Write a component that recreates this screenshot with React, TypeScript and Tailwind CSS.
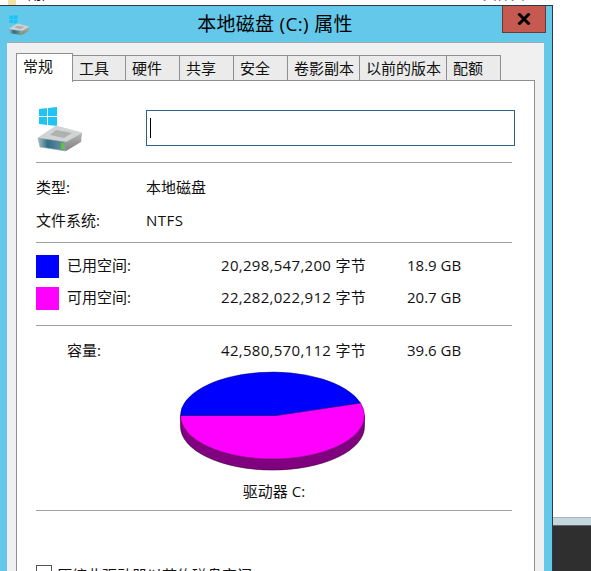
const tabs = [
  { label: "工具", width: "w-[53px]" },
  { label: "硬件", width: "w-[54px]" },
  { label: "共享", width: "w-[54px]" },
  { label: "安全", width: "w-[54px]" },
  { label: "卷影副本", width: "w-[72px]" },
  { label: "以前的版本", width: "w-[87px]" },
  { label: "配额", width: "w-[54px]" },
];

const DriveIcon = ({ className }: { className: string }) => (
  <svg viewBox="0 0 48 48" className={className}>
    <defs>
      <linearGradient id="front" x1="0" y1="0" x2="1" y2="0">
        <stop offset="0" stopColor="#a9bcc2" />
        <stop offset="0.35" stopColor="#2f6f86" />
        <stop offset="0.8" stopColor="#5f8a99" />
        <stop offset="1" stopColor="#8a9ea5" />
      </linearGradient>
      <linearGradient id="side" x1="0" y1="0" x2="0" y2="1">
        <stop offset="0" stopColor="#b5b7b7" />
        <stop offset="1" stopColor="#7f8181" />
      </linearGradient>
    </defs>
    <polygon points="3,4 11,3 11,11 3,11" fill="#1fc4f5" />
    <polygon points="12,3 21,2 21,11 12,11" fill="#1fc4f5" />
    <polygon points="3,12 11,12 11,20 3,19" fill="#1fc4f5" />
    <polygon points="12,12 21,12 21,21 12,20" fill="#1fc4f5" />
    <polygon points="2,33 20,21 46,28 30,37" fill="#d2d4d4" stroke="#d2d4d4" strokeLinejoin="round" />
    <polygon points="20,25 36,28 28,33 14,30" fill="#aeb1b1" />
    <polygon points="2,33 30,37 30,46 4,42" fill="url(#front)" stroke="#8a9ea5" strokeWidth="0.5" strokeLinejoin="round" />
    <polygon points="30,37 46,28 45,37 30,46" fill="url(#side)" />
    <rect x="25" y="38" width="3" height="6" fill="#5fc23c" />
  </svg>
);

const Pie = () => (
  <svg viewBox="0 0 186 100" className="w-[186px] h-[100px]">
    <path d="M0.5 44.5 v11 A92 43.5 0 0 0 184.5 55.5 v-11 A92 43.5 0 0 1 0.5 44.5 Z" fill="#800080" stroke="#3a003a" strokeWidth="0.6" />
    <path d="M96 44.5 L180.5 31.9 A92 43.5 0 0 1 184.5 44.5 A92 43.5 0 0 1 0.5 44.5 Z" fill="#ff00ff" stroke="#5a005a" strokeWidth="0.5" />
    <path d="M96 44.5 L0.5 44.5 A92 43.5 0 0 1 180.5 31.9 Z" fill="#0000ff" stroke="#00006a" strokeWidth="0.5" />
  </svg>
);

const SizeRow = ({ swatch, label, bytes, size, className }: { swatch?: string; label: string; bytes: string; size: string; className: string }) => (
  <div className={`grid grid-cols-[31px_154px_186px_auto] items-start ${className}`}>
    {swatch ? <div className={`w-[23px] h-[23px] ${swatch}`} /> : <div />}
    <span>{label}</span>
    <span className="tracking-[0.3px]">{bytes}</span>
    <span>{size}</span>
  </div>
);

export default function App() {
  return (
    <div className="w-[591px] h-[571px] bg-white overflow-hidden text-[15px] leading-[20px] text-[#111] font-['Open_Sans','Noto_Sans_CJK_SC',sans-serif]">
      {/* desktop behind the dialog, only its lower edge shows */}
      <div className="h-[5px] overflow-hidden flex items-start text-[14px]">
        <div className="ml-[8px] w-[8px] h-[5px] bg-[#f3e1a0]" />
        <span className="ml-[12px] -mt-[16px]">用户</span>
        <span className="ml-[285px] -mt-[16px] text-[#555]">2021/10/20 14:48</span>
        <span className="ml-[28px] -mt-[16px] text-[#555]">文件夹</span>
      </div>

      <div className="flex h-[566px]">
        <div className="relative w-[553px] border-t border-r border-[#2b3a44] bg-[#63c8ea]">
          {/* title bar */}
          <div className="h-[36px] flex items-center relative">
            <DriveIcon className="ml-[8px] mt-[2px] w-[22px] h-[22px] blur-[0.3px]" />
            <div className="flex-1 text-center text-[19px] leading-[24px] tracking-[0.3px] text-black pr-[32px]">本地磁盘 (C:) 属性</div>
            <button className="absolute top-0 right-[6px] w-[44px] h-[27px] bg-[#c75a50] border border-[#6b3a36] border-t-0 flex items-center justify-center">
              <svg viewBox="0 0 14 12" className="w-[14px] h-[12px]">
                <path d="M1.5 0.5 L12.5 11.5 M12.5 0.5 L1.5 11.5" stroke="#000" strokeWidth="3" />
              </svg>
            </button>
          </div>

          {/* dialog body */}
          <div className="ml-[7px] w-[537px] h-[529px] bg-[#f0f0f0] border-t border-[#a3abb0] pl-[9px] pr-[9px] pt-[10px]">
            <div className="flex h-[27px] items-end relative z-10">
              <div className="w-[57px] h-[29px] bg-white border border-b-0 border-[#8e8f94] pl-[6px] pt-[2px] -mb-[2px] text-[15px]">常规</div>
              {tabs.map((t) => (
                <div key={t.label} className={`${t.width} h-[25px] bg-[#ebebeb] border border-b-0 border-l-0 border-[#8e8f94] flex items-center pl-[6px] text-[15px]`}>
                  {t.label}
                </div>
              ))}
            </div>

            <div className="w-[519px] h-[491px] bg-white border border-b-0 border-[#8e8f94] pl-[19px] pt-[24px]">
              <div className="flex items-start h-[57px]">
                <DriveIcon className="w-[48px] h-[48px] blur-[0.4px]" />
                <div className="ml-[62px] mt-[5px] w-[369px] h-[36px] border border-[#2b6288] flex items-center pl-[3px]">
                  <div className="w-px h-[20px] bg-black" />
                </div>
              </div>
              <div className="w-[476px] h-px bg-[#a0a0a0]" />

              <div className="mt-[14px] h-[20px] flex"><span className="w-[110px]">类型:</span><span>本地磁盘</span></div>
              <div className="mt-[13px] h-[20px] flex"><span className="w-[110px]">文件系统:</span><span className="tracking-[0.5px]">NTFS</span></div>
              <div className="mt-[12px] w-[476px] h-px bg-[#a0a0a0]" />

              <SizeRow className="mt-[12px] h-[23px]" swatch="bg-[#0000ff]" label="已用空间:" bytes="20,298,547,200 字节" size="18.9 GB" />
              <SizeRow className="mt-[9px] h-[23px]" swatch="bg-[#ff00ff]" label="可用空间:" bytes="22,282,022,912 字节" size="20.7 GB" />
              <div className="mt-[15px] w-[476px] h-px bg-[#a0a0a0]" />
              <SizeRow className="mt-[14px] h-[20px]" label="容量:" bytes="42,580,570,112 字节" size="39.6 GB" />

              <div className="mt-[11px] ml-[144px]"><Pie /></div>
              <div className="mt-[10px] w-[476px] text-center">驱动器 C:</div>
              <div className="mt-[9px] w-[476px] h-px bg-[#a0a0a0]" />

              <div className="mt-[54px] flex items-start">
                <div className="w-[16px] h-[16px] border border-[#555] shrink-0" />
                <span className="ml-[5px]">压缩此驱动器以节约磁盘空间(C)</span>
              </div>
            </div>
          </div>
        </div>

        {/* window behind the dialog */}
        <div className="flex-1 flex flex-col pt-[512px]">
          <div className="h-[8px] bg-[#c4d6de] border-t border-[#a9b4b9]" />
          <div className="flex-1 bg-[#2f2f2f] border-t border-[#5b686e]" />
        </div>
      </div>
    </div>
  );
}
